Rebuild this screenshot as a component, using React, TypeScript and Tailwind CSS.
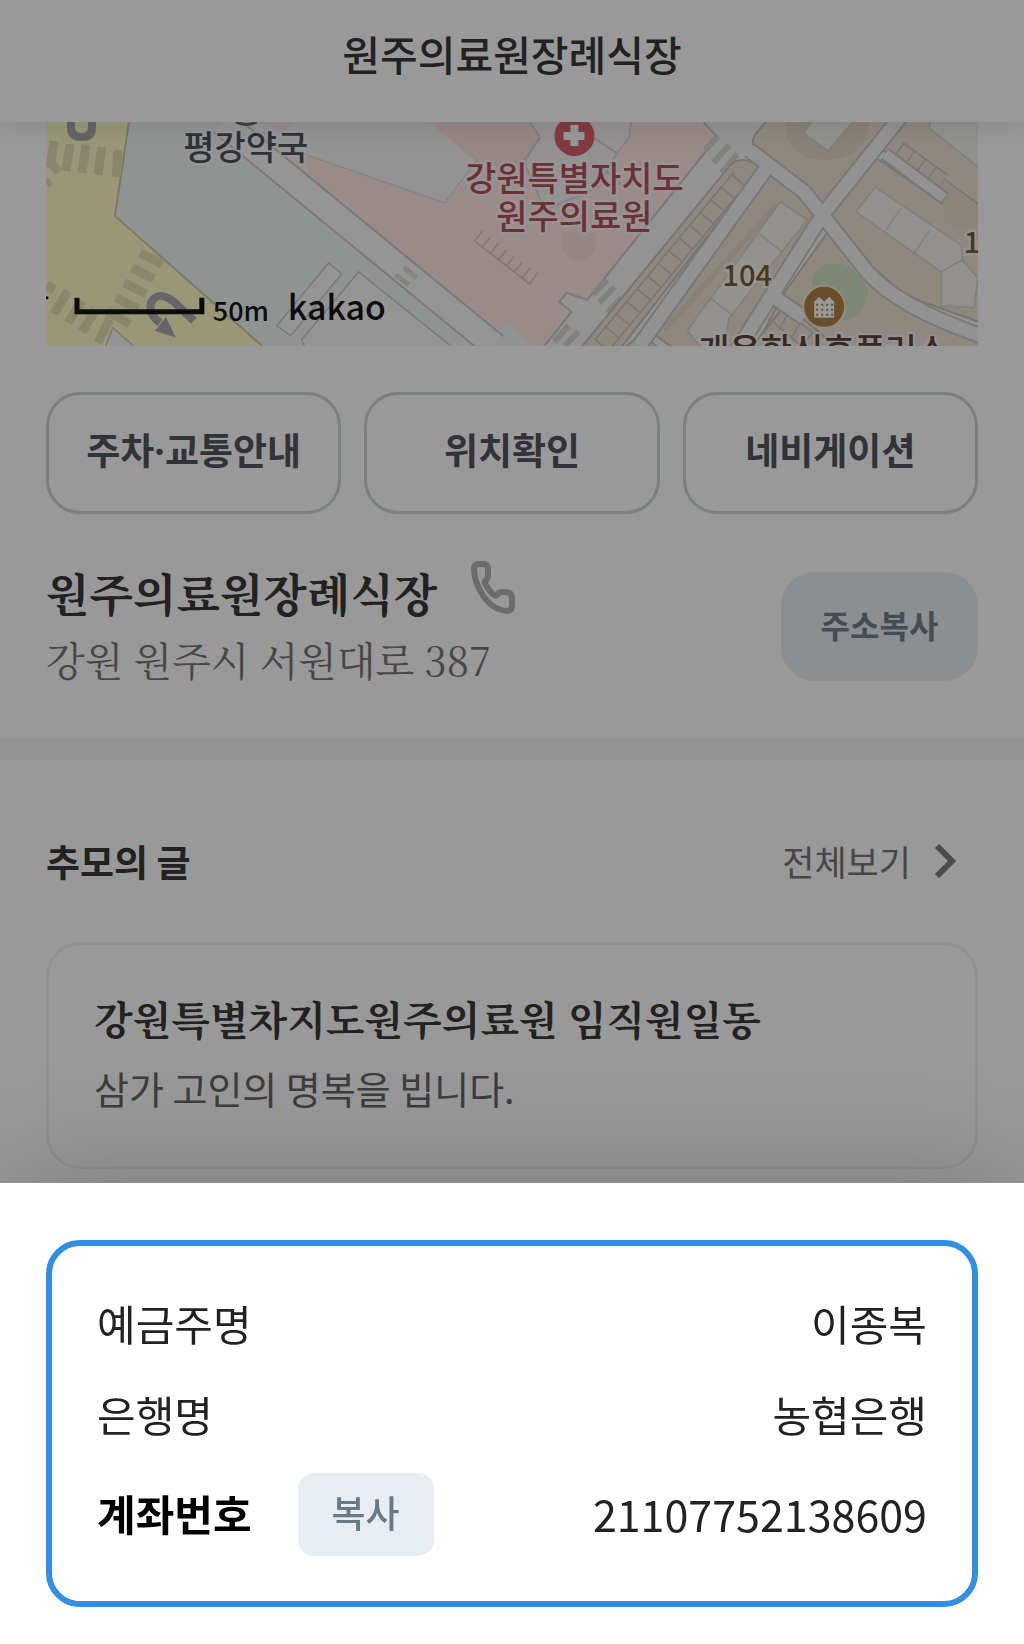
const SANS = "font-['Noto_Sans_CJK_KR',sans-serif]";
const SERIF = "font-['Noto_Serif_CJK_KR','Noto_Sans_CJK_KR',serif]";

const accountRows = [
  { label: "예금주명", value: "이종복" },
  { label: "은행명", value: "농협은행" },
];

const placeButtons = ["주차·교통안내", "위치확인", "네비게이션"];

const MapView = () => {
  return (
    <svg
      viewBox="46 122 933 224"
      className="block w-full"
      fontFamily="'Noto Sans CJK KR', sans-serif"
      role="img"
      aria-label="지도"
    >
      <rect x="46" y="122" width="933" height="224" fill="#f5f5f6" />

      {/* west block */}
      <path d="M129 122H205L480 346H260L115 216Z" fill="#eff5f2" />
      <path d="M250 122H440L505 168L455 200L445 203L300 150Z" fill="#f6f5f7" />
      <g stroke="#c9cac8" strokeWidth="1.5" fill="#f8f8f8">
        <path d="M329 263L342 274L291 336L277 326Z" />
        <path d="M456 350L359 272L302 340L306 350" />
      </g>

      {/* main road */}
      <path d="M46 122H129L115 216L262 346H46Z" fill="#fffcc9" />
      <path d="M129 122L115 216L262 346" fill="none" stroke="#cfc9a8" strokeWidth="2" />
      <path d="M104 350L113 328L138 350Z" fill="#f5f5f6" stroke="#cfc9a8" strokeWidth="1.5" />
      <g stroke="#e6dfb4" strokeWidth="9">
        <path d="M54 141L50 168M70 144L66 171M86 145L82 173M102 147L98 175M118 150L116 177" />
        <path d="M48 160L59 172M46 184L50 180" />
        <path d="M140 253L162 264M132 268L154 279M124 283L146 294M116 298L138 309M108 312L130 324" />
        <path d="M53 283L48 292M68 291L54 314M82 301L68 323M96 310L82 332M110 319L98 343" />
      </g>
      <path d="M71 122V128Q71 137 82 137Q92 137 92 128V122" fill="none" stroke="#aaaab0" strokeWidth="8" />
      <path d="M194 321L174 302Q158 290 151 303Q148 314 160 323" fill="none" stroke="#aaaab0" strokeWidth="8" />
      <path d="M166 317L176 338L155 331Z" fill="#aaaab0" />

      {/* hospital grounds */}
      <path d="M275 158L300 151L445 203L475 162L430 122H700L718 137L588 300L567 293L560 302L572 312L545 346H502L490 326Z" fill="#fde8e4" />
      <path d="M275 158L290 149L445 203L474 172L430 122H268Z" fill="#f6f5f7" />
      <path d="M290 149L445 203L478 160L430 120" fill="none" stroke="#dedbdc" strokeWidth="1.5" />
      <path d="M268 122H296L282 132Z" fill="#fde8e4" />
      <path d="M430 122H545L560 140L535 170H492Z" fill="#fbe2de" />
      <path d="M528 118H632L630 137L617 154L598 188L545 210L524 160L541 138Z" fill="#f7f2f4" stroke="#d8d2d4" strokeWidth="1.5" />
      <path d="M540 138L526 160M595 138L620 155M600 165L626 188" stroke="#d8d2d4" strokeWidth="2" />
      <path d="M562 232H597V247A18 18 0 0 1 562 247Z" fill="#f9dcdc" />
      <path d="M490 331L512 325L530 346H500Z" fill="#eef6f3" />
      <g stroke="#d7c4c2" strokeWidth="1.5" fill="none">
        <path d="M475 241L530 284L539 272M475 241L483 231M483 247L491 237M491 253L499 243M499 260L507 250M507 266L515 256M515 272L523 262M523 278L531 268" />
      </g>

      {/* alley that runs between the two blocks */}
      <path d="M222 122L495 346" stroke="#cac9c5" strokeWidth="28" />
      <path d="M222 122L495 346" stroke="#f8f8f9" strokeWidth="24" />
      <path d="M396 275L409 285M404 267L417 278" stroke="#dcdad5" strokeWidth="5" />

      {/* street east of the hospital */}
      <path d="M704 122L718 137L588 300L567 293L560 302L572 312L545 346H600L768 166L752 143L765 122Z" fill="#f5f5f6" />
      <path d="M704 122L718 137L588 300L567 293L560 302L572 312L545 346" fill="none" stroke="#cbc7c7" strokeWidth="2" />
      <path d="M706 150L719 136M714 163L730 145M722 173L738 154M594 294L608 280M600 303L615 287M608 313L622 298M555 342L569 326M565 346L579 332" stroke="#dad7d2" strokeWidth="6" />

      {/* apartment blocks */}
      <g fill="#ede3d6" stroke="#c8c2bb" strokeWidth="2">
        <path d="M770 118H892L824 207L805 183L756 148Q750 143 758 132Z" />
        <path d="M580 350L732 164Q744 155 762 167L620 350Z" />
        <path d="M770 175L796 190L822 222L731 350H676L646 328Z" />
        <path d="M905 118H983V207L943 178L948 204L883 149Z" />
        <path d="M877 158L946 205L956 192L983 207V323L906 296L866 260L832 216Z" />
        <path d="M828 233L863 276L911 313L983 341V350H755L783 296Z" />
        <path d="M787 304L840 350H750Z" />
        <path d="M622 350L642 335L662 350Z" />
      </g>
      <path d="M786 122Q786 160 828 160Q868 158 870 122H854L829 151L804 133L812 122Z" fill="#e4d8ca" />
      <path d="M657 320L752 195M665 330L778 205" stroke="#e4d8ca" strokeWidth="6" />
      <path d="M943 178L979 205V240L945 222Z" fill="#e8ddcf" />

      {/* parking bays */}
      <path d="M602 346L741 178" stroke="#c8c2bb" strokeWidth="19" />
      <path d="M602 346L741 178" stroke="#ede3d6" strokeWidth="16" />
      <path d="M602 346L741 178" stroke="#c8c2bb" strokeWidth="18" strokeDasharray="1.5 15" />
      <path d="M899 150L943 182" stroke="#c8c2bb" strokeWidth="19" />
      <path d="M899 150L943 182" stroke="#ede3d6" strokeWidth="16" />
      <path d="M899 150L943 182" stroke="#c8c2bb" strokeWidth="18" strokeDasharray="1.5 12" />
      <path d="M779 305L815 334M769 318L802 346M780 330L788 315M792 338L802 322M804 344L814 332" stroke="#c8c2bb" strokeWidth="1.5" />

      {/* alleys */}
      <g fill="none" strokeLinejoin="round">
        <path d="M886 154L946 199" stroke="#cbc6c2" strokeWidth="14" />
        <path d="M640 346L766 170M750 150L805 192L824 216L868 272Q900 308 985 337M902 116L824 214L738 350M776 298L805 318" stroke="#cbc6c2" strokeWidth="17" />
        <path d="M886 154L945 198" stroke="#f5f4f5" strokeWidth="10" />
        <path d="M640 346L766 170M750 150L805 192L824 216L868 272Q900 308 985 337M902 116L824 214L738 350M776 298L805 318" stroke="#f5f4f5" strokeWidth="13" />
      </g>

      {/* buildings */}
      <g fill="#f3f2ec" stroke="#d5d2ca" strokeWidth="1.5">
        <path d="M781 202L808 220L730 318L724 350H704L688 331Z" />
        <path d="M760 234L784 253M711 298L735 317" />
        <path d="M876 187L963 246V260L979 278L975 308L942 306V272L857 212Z" />
        <path d="M902 208L885 233M931 230L914 255M942 272L963 260" />
        <path d="M815 118L804 133L829 151L857 118Z" />
        <path d="M932 118L930 128L983 170V118Z" />
      </g>

      <path d="M812 281Q817 261 842 264Q859 268 869 291Q866 318 843 321L820 310Z" fill="#cfe2c4" />

      {/* hospital pin */}
      <circle cx="575" cy="136" r="20" fill="#d9636b" />
      <path d="M575 125V146M564 136H585" stroke="#fff" strokeWidth="8" />

      {/* apartment pin */}
      <circle cx="825" cy="307" r="21" fill="#b0824a" stroke="#f5e8d3" strokeWidth="2" />
      <path d="M815 318V302L820 297L825 302L830 297L835 302V318Z" fill="#fff" />
      <path d="M817 305H834M817 310H834M817 315H834" stroke="#b0824a" strokeWidth="2" strokeDasharray="2 3" />

      <path d="M236 122Q246 127 257 122" fill="none" stroke="#66727c" strokeWidth="3" />

      <g textAnchor="middle" strokeLinejoin="round" paintOrder="stroke" stroke="#fff" strokeWidth="5" strokeOpacity="0.6" fontWeight="500">
        <text x="246" y="160" fontSize="34" fill="#4c5560">평강약국</text>
        <text x="575" y="191" fontSize="34" fill="#b5525c">강원특별자치도</text>
        <text x="575" y="229" fontSize="34" fill="#b5525c">원주의료원</text>
        <text x="748" y="286" fontSize="29" fill="#795e30">104</text>
        <text x="973" y="253" fontSize="29" fill="#795e30">1</text>
        <text x="824" y="363" fontSize="34" fill="#5a4339">개운한신휴플러스</text>
      </g>

      {/* scale and provider */}
      <path d="M77 298V312H202V298" fill="none" stroke="#141414" strokeWidth="5" />
      <text x="213" y="321" fontSize="27" fontWeight="500" fill="#141414">50m</text>
      <text x="288" y="320" fontSize="34" fontWeight="500" fill="#141414">kakao</text>
      <circle cx="47" cy="298" r="1.5" fill="#141414" />
    </svg>
  );
};

const PhoneIcon = () => {
  return (
    <svg viewBox="0 0 44 53" className="h-[53px] w-[44px]" fill="none" stroke="#b4b4b4" strokeWidth="6" strokeLinejoin="round">
      <path d="M8 3H12Q17 3 17 8V15Q17 18 14 20Q13 22 15 24Q19 31 23 34Q25 36 26 34Q28 31 31 31H34Q41 31 41 37V44Q41 50 36 50Q21 49 11 33Q3 20 3 8Q3 3 8 3Z" />
    </svg>
  );
};

const AccountSheet = () => {
  return (
    <section className="fixed inset-x-0 bottom-0 bg-white px-[46px] pt-[57px] pb-[37px] shadow-[0_0_120px_rgba(0,0,0,0.2)]">
      <div className="rounded-[34px] border-6 border-[#328ee0] px-[45px] pt-[31px] pb-[45px] text-[42px] leading-[91px] text-[#222]">
        {accountRows.map((row) => (
          <div key={row.label} className="flex justify-between">
            <span>{row.label}</span>
            <span>{row.value}</span>
          </div>
        ))}
        <div className="mt-[14px] flex items-start leading-[80px]">
          <span className="font-bold text-black">계좌번호</span>
          <button className="ml-[46px] h-[83px] w-[136px] rounded-2xl bg-[#e7edf2] pb-1.5 text-[37px] leading-[60px] font-medium text-[#687a86]">
            복사
          </button>
          <span className="ml-auto text-[43px]">21107752138609</span>
        </div>
      </div>
    </section>
  );
};

const App = () => {
  return (
    <div className={`min-h-screen bg-white text-[#393939] ${SANS}`}>
      <header className="relative z-10 flex h-[122px] items-center justify-center bg-white pb-4 shadow-[0_2px_30px_rgba(0,0,0,0.12)]">
        <h1 className="text-[41px] leading-[60px] font-medium">원주의료원장례식장</h1>
      </header>

      <main>
        <section className="px-[46px] pb-[44px]">
          <MapView />
          <div className="mt-[46px] grid grid-cols-3 gap-[23px] font-['Open_Sans','Noto_Sans_CJK_KR',sans-serif]">
            {placeButtons.map((name) => (
              <button
                key={name}
                className="h-[122px] rounded-[34px] border-3 border-[#ccd5d2] pb-1 text-[37px] leading-[60px] font-bold text-[#53555f]"
              >
                {name}
              </button>
            ))}
          </div>
          <div className="mt-[47px] flex items-center justify-between">
            <div>
              <div className="flex items-start gap-[34px]">
                <h2 className={`text-[45px] leading-[64px] font-bold ${SERIF}`}>원주의료원장례식장</h2>
                <button aria-label="전화">
                  <PhoneIcon />
                </button>
              </div>
              <p className={`text-[40px] leading-[68px] text-[#777] ${SERIF}`}>강원 원주시 서원대로 387</p>
            </div>
            <button className="h-[109px] w-[197px] rounded-[34px] bg-[#e8eef3] pb-1.5 text-[32px] leading-[60px] font-bold text-[#70808a]">
              주소복사
            </button>
          </div>
        </section>

        <div className="h-[23px] bg-[#f5f5f5]" />

        <section className="px-[46px] pt-[71px]">
          <div className="flex items-center justify-between">
            <h2 className="text-[37px] leading-[60px] font-bold">추모의 글</h2>
            <a href="#condolences" className="mr-[22px] flex items-center gap-[23px] text-[35px] leading-[60px] text-[#777]">
              전체보기
              <svg viewBox="0 0 22 34" className="h-[34px] w-[22px]" fill="none" stroke="#808080" strokeWidth="6">
                <path d="M3 2L18 17L3 32" />
              </svg>
            </a>
          </div>
          <article className="mt-[51px] h-[227px] rounded-[34px] border-3 border-[#f0f0f0] px-[45px] pt-[39px]">
            <h3 className={`text-[40px] leading-[68px] font-bold ${SERIF}`}>강원특별차지도원주의료원 임직원일동</h3>
            <p className="text-[38px] leading-[72px] text-[#666]">삼가 고인의 명복을 빕니다.</p>
          </article>
        </section>
      </main>

      <div className="fixed inset-0 z-20 bg-black/40">
        <AccountSheet />
      </div>
    </div>
  );
};

export default App;
